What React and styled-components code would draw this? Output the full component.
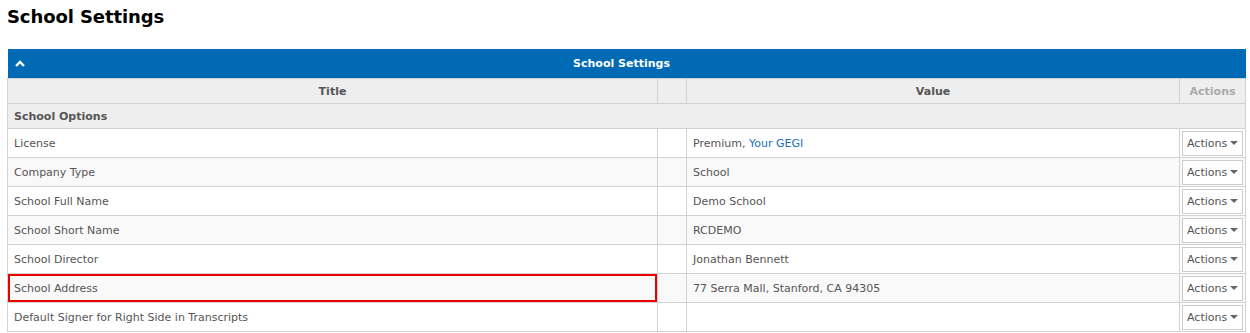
import styled, { createGlobalStyle } from "styled-components";

const GlobalStyle = createGlobalStyle`
  body {
    margin: 0;
    background: #fff;
    font-family: "DejaVu Sans", Verdana, sans-serif;
  }
`

const Page = styled.div`
  padding: 6px 5px 0 7px;
`
const Heading = styled.h1`
  margin: 0 0 21px 0;
  font-size: 18px;
  font-weight: bold;
  color: #000;
  line-height: 22px;
  letter-spacing: -0.1px;
`
const Table = styled.table`
  width: 1238px;
  border-collapse: collapse;
  table-layout: fixed;
  font-size: 11px;
  color: #555;
`
const Caption = styled.th`
  background: #006bb4;
  color: #fff;
  height: 29px;
  padding: 0 10px 0 0;
  position: relative;
  font-size: 11px;
  font-weight: bold;
  text-align: center;
`
const Toggle = styled.span`
  position: absolute;
  left: 7px;
  top: 11px;
  display: flex;
`
const Th = styled.th`
  background: #eee;
  border: 1px solid #d2d2d2;
  height: 24px;
  padding: 0 6px;
  font-size: 11px;
  font-weight: bold;
  color: ${p => (p.$muted ? "#aaa" : "#555")};
  text-align: center;
`
const Section = styled.td`
  background: #eee;
  border: 1px solid #d2d2d2;
  height: 24px;
  padding: 0 6px;
  font-weight: bold;
  color: #555;
`
const Tr = styled.tr`
  background: ${p => (p.$odd ? "#f9f9f9" : "#fff")};
`
const Td = styled.td`
  border: 1px solid #d2d2d2;
  height: 28px;
  padding: 0 6px;
  white-space: nowrap;
  ${p => p.$highlight && "box-shadow: inset 0 0 0 2px #e60000;"}
`
const ActionCell = styled.td`
  border: 1px solid #d2d2d2;
  padding: 0 2px;
`
const ActionBtn = styled.button`
  display: flex;
  align-items: center;
  gap: 3px;
  height: 25px;
  width: 61px;
  padding: 0 4px;
  border: 1px solid #ccc;
  background: #fff;
  color: #555;
  font-family: "DejaVu Sans", Verdana, sans-serif;
  font-size: 11px;
  cursor: pointer;
`
const Caret = styled.span`
  width: 0;
  height: 0;
  border-left: 4px solid transparent;
  border-right: 4px solid transparent;
  border-top: 4px solid #666;
`
const Link = styled.a`
  color: #1a6fc0;
  text-decoration: none;
`

const rows = [
  { title: "License", value: <>Premium, <Link href="#">Your GEGI</Link></> },
  { title: "Company Type", value: "School" },
  { title: "School Full Name", value: "Demo School" },
  { title: "School Short Name", value: "RCDEMO" },
  { title: "School Director", value: "Jonathan Bennett" },
  { title: "School Address", value: "77 Serra Mall, Stanford, CA 94305", highlight: true },
  { title: "Default Signer for Right Side in Transcripts", value: "" },
]

const App = () => {
  return (
    <Page>
      <GlobalStyle />
      <Heading>School Settings</Heading>
      <Table>
        <colgroup>
          <col style={{ width: 650 }} />
          <col style={{ width: 29 }} />
          <col style={{ width: 493 }} />
          <col style={{ width: 66 }} />
        </colgroup>
        <thead>
          <tr>
            <Caption colSpan={4}>
              <Toggle>
                <svg width="10" height="7" viewBox="0 0 10 7">
                  <path d="M1 6 L5 2 L9 6" fill="none" stroke="#fff" strokeWidth="2.4" />
                </svg>
              </Toggle>
              School Settings
            </Caption>
          </tr>
          <tr>
            <Th>Title</Th>
            <Th />
            <Th>Value</Th>
            <Th $muted>Actions</Th>
          </tr>
        </thead>
        <tbody>
          <tr>
            <Section colSpan={4}>School Options</Section>
          </tr>
          {rows.map((it, idx) => (
            <Tr key={it.title} $odd={idx % 2 === 1}>
              <Td $highlight={it.highlight}>{it.title}</Td>
              <Td />
              <Td>{it.value}</Td>
              <ActionCell>
                <ActionBtn>Actions<Caret /></ActionBtn>
              </ActionCell>
            </Tr>
          ))}
        </tbody>
      </Table>
    </Page>
  )
}

export default App;
